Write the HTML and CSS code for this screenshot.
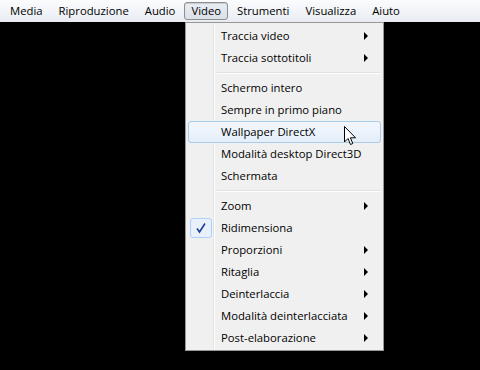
FILE: index.html
```html
<!DOCTYPE html>
<html>
<head>
    <title>Video</title>
    <meta charset="UTF-8">
    <link rel="stylesheet" href="styles.css">
</head>
<body>
    <nav class="menubar">
        <span class="menubar-item">Media</span>
        <span class="menubar-item">Riproduzione</span>
        <span class="menubar-item">Audio</span>
        <span class="menubar-item open">Video</span>
        <span class="menubar-item">Strumenti</span>
        <span class="menubar-item">Visualizza</span>
        <span class="menubar-item">Aiuto</span>
    </nav>

    <div class="screen"></div>

    <div class="popup">
        <div class="item sub">Traccia video</div>
        <div class="item sub">Traccia sottotitoli</div>
        <div class="sep"></div>
        <div class="item">Schermo intero</div>
        <div class="item">Sempre in primo piano</div>
        <div class="item hover">Wallpaper DirectX</div>
        <div class="item">Modalità desktop Direct3D</div>
        <div class="item">Schermata</div>
        <div class="sep"></div>
        <div class="item sub">Zoom</div>
        <div class="item checked">
            <span class="check">
                <svg width="12" height="12" viewBox="0 0 12 12"><path d="M2 6.5 L4.5 10 L10 1.5" fill="none" stroke="#1c3f95" stroke-width="1.6"/></svg>
            </span>
            Ridimensiona
        </div>
        <div class="item sub">Proporzioni</div>
        <div class="item sub">Ritaglia</div>
        <div class="item sub">Deinterlaccia</div>
        <div class="item sub">Modalità deinterlacciata</div>
        <div class="item sub">Post-elaborazione</div>
    </div>

    <!-- puntatore del mouse -->
    <svg class="cursor" width="13" height="20" viewBox="0 0 13 20">
        <path d="M0.5 0.5 L0.5 16 L4 12.5 L6.5 18.5 L8.8 17.5 L6.4 11.8 L11.5 11.8 Z" fill="#fff" stroke="#000" stroke-width="1"/>
    </svg>
</body>
</html>
```

FILE: styles.css
```css
* {
    margin: 0;
    padding: 0;
    box-sizing: border-box;
}

body {
    font-family: 'Open Sans', 'Noto Sans', sans-serif;
    font-size: 11.3px;
    background: #000;
    color: #000;
    width: 480px;
    height: 370px;
    overflow: hidden;
    position: relative;
}

.menubar {
    height: 22px;
    display: flex;
    align-items: center;
    gap: 2px;
    padding-left: 3px;
    background: linear-gradient(#fbfcfe, #e8ecf2);
}

.menubar-item {
    height: 18px;
    line-height: 16px;
    padding: 0 6px;
    border: 1px solid transparent;
    border-radius: 3px;
}

.menubar-item.open {
    border-color: #8e8f8f;
    background: linear-gradient(#e9eef4, #dbe1e8);
    box-shadow: inset 0 1px 1px rgba(0, 0, 0, 0.15);
}

.screen {
    height: 348px;
    background: #000;
}

.popup {
    position: absolute;
    left: 185px;
    top: 22px;
    width: 199px;
    height: 329px;
    padding: 2px;
    background: #f0f0f0;
    border: 1px solid #979797;
    background-image: linear-gradient(to right, transparent 27px, #e2e3e3 27px, #e2e3e3 28px, #fff 28px, #fff 29px, transparent 29px);
}

.item {
    position: relative;
    height: 22px;
    padding-left: 32px;
    border: 1px solid transparent;
    border-radius: 3px;
    line-height: 20px;
}

.item.sub::after {
    content: '';
    position: absolute;
    right: 12px;
    top: 6px;
    border-left: 4px solid #000;
    border-top: 4px solid transparent;
    border-bottom: 4px solid transparent;
}

.item.hover {
    border-color: #a8cbe8;
    background: linear-gradient(#f3f8fd, #e4eef9);
}

.check {
    position: absolute;
    left: 1px;
    top: 0;
    width: 22px;
    height: 20px;
    border: 1px solid #aecff7;
    border-radius: 3px;
    background: #e8f1fb;
    display: flex;
    align-items: center;
    justify-content: center;
}

.sep {
    height: 8px;
    margin-left: 29px;
    margin-right: 1px;
    background: linear-gradient(transparent 3px, #e0e0e0 3px, #e0e0e0 4px, #fff 4px, #fff 5px, transparent 5px);
}

.cursor {
    position: absolute;
    left: 344px;
    top: 126px;
}
```
